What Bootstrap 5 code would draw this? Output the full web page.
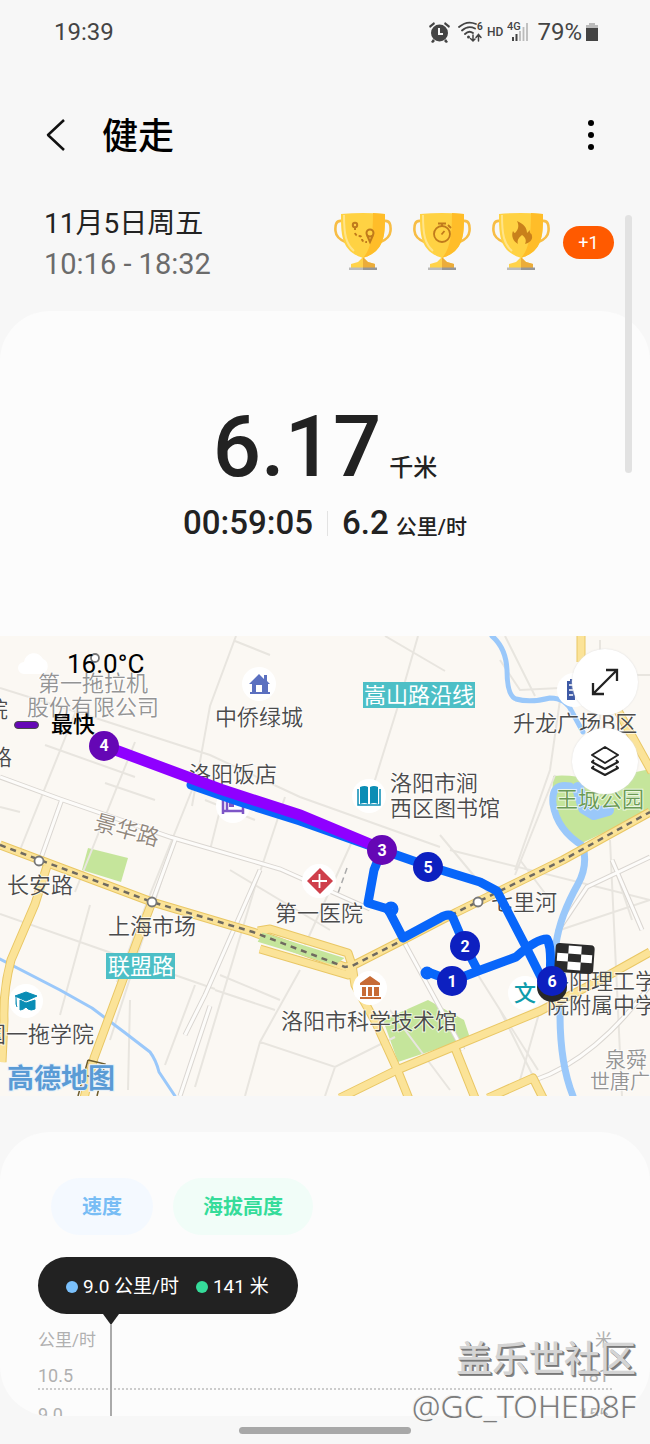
<!DOCTYPE html>
<html lang="zh-CN">
<head>
<meta charset="utf-8">
<meta name="viewport" content="width=device-width, initial-scale=1">
<title>健走</title>
<link href="https://cdn.jsdelivr.net/npm/bootstrap@5.3.0/dist/css/bootstrap.min.css" rel="stylesheet">
<style>
  body { background: #f7f7f7; color: #222; font-family: Roboto, "Noto Sans CJK SC", sans-serif; overflow-x: hidden; }
  svg { display: block; flex: none; }
  .status-row { height: 64px; padding: 0 52px 0 54px; font-size: 24px; line-height: 32px; color: #444; }
  .hd-mark { font-size: 12px; font-weight: 500; line-height: 16px; }
  .title-row { padding: 45px 44px 0 44px; height: 116px; }
  .title-row h1 { font-size: 36px; line-height: 56px; font-weight: 500; color: #000; padding-left: 34px; }
  .plain-btn { border: 0; background: none; padding: 0; color: #000; }
  .date-row { padding: 24px 36px 27px 44px; }
  .date-main { font-size: 28px; line-height: 40px; }
  .date-sub { font-size: 29px; line-height: 40px; color: #6b6b6b; }
  .trophies { gap: 21px; }
  .more-pill { width: 51px; height: 33px; margin-left: 13px; border-radius: 17px; background: #ff5a00; color: #fff; font-size: 18px; line-height: 33px; text-align: center; }
  .thumb-bar { position: absolute; top: 215px; right: 18px; width: 7px; height: 258px; border-radius: 4px; background: #e2e2e2; }
  .sheet { background: #fcfcfc; }
  .summary { border-radius: 50px 50px 0 0; padding: 86px 0 90px; }
  .distance { font-size: 85px; line-height: 100px; font-weight: 500; }
  .distance small { font-size: 24px; line-height: 24px; font-weight: 500; margin-left: 8px; }
  .pace { font-size: 33px; line-height: 46px; font-weight: 500; margin-top: 3px; }
  .pace small { font-size: 21px; line-height: 21px; font-weight: 500; margin-left: 7px; }
  .pace .rule { width: 1px; height: 25px; background: #e3e3e3; margin: 0 14px; }
  .map-box svg.city { width: 100%; height: auto; font-family: "Noto Sans CJK SC", sans-serif; font-size: 22px; font-weight: 300; }
  .overlay-left { position: absolute; top: 13px; left: 14px; color: #000; }
  .temp { font-size: 26px; line-height: 30px; gap: 17px; }
  .legend-row { font-size: 22px; line-height: 30px; font-weight: 500; margin-top: 31px; gap: 12px; }
  .swatch { width: 25px; height: 8px; border: 1px solid #4a4a4a; border-radius: 4px; background: #6507b5; }
  .overlay-right { position: absolute; top: 13px; right: 12px; gap: 13px; }
  .round-btn { width: 66px; height: 66px; border: 0; border-radius: 50%; background: #fff; box-shadow: 0 0 2px #ddd; padding: 0; display: grid; place-items: center; }
  .chart-sheet { margin-top: 36px; border-radius: 50px; overflow: hidden; padding: 46px 38px 0; }
  .chips { gap: 20px; padding-left: 13px; }
  .chip { border: 0; border-radius: 29px; height: 57px; padding: 0 30px; font-size: 20px; font-weight: 700; }
  .chip-speed { background: #f4f9ff; color: #78bdf5; padding: 0 31px; }
  .chip-alt { background: #f1fdf8; color: #35dc9a; }
  .bubble { position: relative; margin-top: 22px; height: 57px; width: max-content; border-radius: 29px; background: #222; color: #fff; font-size: 19px; padding: 3px 29px 0 28px; }
  .bubble::after { content: ""; position: absolute; top: 100%; left: 65px; border: 8px solid transparent; border-bottom-width: 0; border-top: 11px solid #222; }
  .bubble i { width: 12px; height: 12px; border-radius: 50%; background: #7ac0fb; margin-right: 5px; }
  .bubble i.alt { background: #35dc9a; margin: 0 5px 0 17px; }
  .plot { position: relative; margin-top: 14px; font-size: 18px; line-height: 24px; color: #b0b0b0; }
  .plot .unit { font-size: 17px; }
  .plot .tick { margin-top: 12px; border-bottom: 2px dotted #ccc; padding-right: 3px; }
  .plot .cut { margin-top: 13px; height: 13px; overflow: hidden; border: 0; }
  .plot .cursor-line { position: absolute; top: -3px; bottom: 0; left: 72px; border-left: 2px solid #aaa; }
  .home-bar { width: 172px; height: 7px; border-radius: 4px; background: #a8a8a8; margin: 11px auto 10px; }
  .stamp { position: absolute; right: 14px; bottom: 5px; text-align: right; color: #d4d4d4; text-shadow: 1px 1px 0 #777, 2px 2px 0 #888; }
  .stamp b { display: block; font-size: 36px; line-height: 46px; font-weight: 500; }
  .stamp span { display: block; font: 300 32px/46px "Noto Sans", sans-serif; color: #7c7c7c; text-shadow: -1px -1px 0 #eee; }
</style>
</head>
<body>
<div class="position-relative">
  <div class="status-row d-flex align-items-center">
    <span>19:39</span>
    <div class="ms-auto d-flex align-items-center">
      <svg width="21" height="22" viewBox="0 0 21 22" fill="#444"><circle cx="10.500" cy="12" r="8.500"/><path d="M1 7L0 5 5 1l1 2zM20 7l1-2-5-4-1 2zM4 18l2 2-2 2-2-1zM17 18l-2 2 2 2 2-1z"/><path d="M10 7v6h4" fill="none" stroke="#f7f7f7" stroke-width="2"/></svg>
      <svg class="ms-2" width="25" height="22" viewBox="0 0 25 22"><g fill="none" stroke="#444" stroke-width="1.800" stroke-linecap="round"><path d="M1 6Q9-1 18 3M4 9.500Q10 4 17 7.500M7 13q4-4 8-1"/><path d="M15 14v6M12.500 17.500L15 20l2-2M20.500 20v-6M18 16.500l2.500-3 2.500 3" stroke-width="1.500"/></g><circle cx="10.500" cy="16" r="1.500" fill="#444"/><text x="19" y="9" font-size="10" font-weight="700" fill="#444">6</text></svg>
      <span class="hd-mark ms-1">HD</span>
      <svg class="ms-1" width="22" height="22" viewBox="0 0 22 22"><text x="0" y="9" font-size="11" font-weight="500" fill="#444">4G</text><path d="M6 20v-4M9.500 20v-7" stroke="#444" stroke-width="2"/><path d="M13 20V10M16.500 20V6M20 20V2" stroke="#bbb" stroke-width="1.800"/></svg>
      <span class="ms-2">79%</span>
      <svg class="ms-1" width="12" height="20" viewBox="0 0 12 20"><path d="M3 1h6v2h3v6H0V3h3z" fill="#bbb"/><path d="M0 6h12v13H0z" fill="#444"/></svg>
    </div>
  </div>

  <header class="title-row d-flex align-items-start">
    <button class="plain-btn" aria-label="返回"><svg width="24" height="52" viewBox="0 0 24 52"><path d="M20 11L4 26l16 15" fill="none" stroke="#111" stroke-width="2.500" stroke-linejoin="round"/></svg></button>
    <h1 class="mb-0 flex-fill">健走</h1>
    <button class="plain-btn" aria-label="更多"><svg width="30" height="52" viewBox="0 0 30 52"><g fill="#000"><circle cx="15" cy="14" r="3"/><circle cx="15" cy="26" r="3"/><circle cx="15" cy="38" r="3"/></g></svg></button>
  </header>

  <section class="date-row d-flex">
    <div>
      <div class="date-main">11月5日周五</div>
      <div class="date-sub">10:16 - 18:32</div>
    </div>
    <div class="ms-auto d-flex align-items-center pb-1">
      <svg width="0" height="0" class="position-absolute"><defs>
        <g id="cup">
          <path d="M8 8C2 7 1 12 1.500 18s5 9 10 11M50 8c6-1 7 4 6.500 10s-5 9-10 11" fill="none" stroke="#f7bd45" stroke-width="2.600"/>
          <path d="M29 44l5 5 7 2v4H17v-4l7-2z" fill="#ffd34a"/><path d="M29 44l5 5 7 2v4H29z" fill="#ebac3a"/>
          <path d="M15 54.500h14V57H15z" fill="#bbb"/><path d="M29 54.500h14V57H29z" fill="#969696"/>
          <path d="M7 1Q29-1 51 1C51 22 51 38 29 45 7 38 7 22 7 1z" fill="#ffd243"/>
          <path d="M39 0l12 1C51 22 51 38 29 45c8-9 10-22 10-45z" fill="#ffbd29"/>
          <path d="M10 2c0 20 2 29 10 36" fill="none" stroke="#ffe48a" stroke-width="2"/>
        </g></defs></svg>
      <div class="trophies d-flex">
        <svg width="58" height="58" viewBox="0 0 58 58"><use href="#cup"/><g fill="none" stroke="#c07a1c" stroke-width="2"><circle cx="21" cy="12" r="2.200"/><path d="M21 14v4M21 20q1 3 4 3t3 3 5 3" stroke-dasharray="3 2"/><circle cx="36" cy="20" r="3.500"/><path d="M33 22l3 7 3-7"/></g></svg>
        <svg width="58" height="58" viewBox="0 0 58 58"><use href="#cup"/><g fill="none" stroke="#c07a1c" stroke-width="1.800"><circle cx="29" cy="21" r="8"/><path d="M25 10.500h8M29 10v3M35 12l3 3M28.500 21.500l3-3.500"/></g></svg>
        <svg width="58" height="58" viewBox="0 0 58 58"><use href="#cup"/><path d="M26 31c-5-3-7-8-5-13 1 1 1 2 2 2 4-4 4-8 2-12 7 3 10 7 10 12l3-3c-1 4 2 3 2 6 1 4-3 7-7 8 2-4 0-7-3-9-4 3-5 6-4 9z" fill="#c9801b"/></svg>
      </div>
      <span class="more-pill">+1</span>
    </div>
  </section>
  <div class="thumb-bar"></div>

  <section class="sheet summary">
    <div class="distance text-center">6.17<small>千米</small></div>
    <div class="pace d-flex justify-content-center align-items-center">
      <span>00:59:05</span><span class="rule"></span><span>6.2<small>公里/时</small></span>
    </div>
  </section>

  <section class="map-box position-relative">
    <svg class="city" viewBox="0 636 650 460">
      <rect y="636" width="650" height="460" fill="#fbf8f3"/>
      <!-- parks -->
      <g fill="#c5e59b">
        <path d="M88 848l40 10-7 24-39-12z"/>
        <path d="M553 776q20-2 40 5 30-6 57-12v42l-68 32q-24-20-30-40z"/>
        <path d="M383 1020l45-20 36 20 6 18-72 24z"/>
      </g>
      <!-- minor streets -->
      <g fill="none" stroke="#e8e5df" stroke-width="2">
        <path d="M0 688l80 25 130 42 90 42 140 50M236 636l-26 70-18 100M235 641l35 14M78 706L20 850M135 742l-60 150M192 790l-45 112-30 80M45 745l90 32M105 783l50 17M0 807l20 5M285 797l-30 90-60 200M355 835l-50 110M165 870l-55 170M0 914l100 35 115 40M418 636l-20 70-28 90M385 636l60 35M500 660l20 30 40-2M560 700l-10 70-35 100M555 775l-40 100M440 835l50 60M220 975l60 25M300 970l-40 72 75 25 60-30M260 1042l-15 54M130 1000l-2 90M195 985l-30 80M335 1067l-10 29M478 975l60 95M500 1010l40 80M560 930l90-30M612 860l20 60M600 720v-80M600 675h50M610 840l12 256M230 870l100 60M90 905l-30 110M215 990l60 20"/>
        <path d="M505 636l30 60M450 850l200 50M195 780l30 10-15 60M205 800l50 20M520 860l30 40M540 1010l-20 70M390 1010l60 80"/>
      </g>
      <g fill="none">
        <path d="M0 777l60 22 110 38 110 32 90 40M62 799L41 858M260 870l-55 125-20 40M175 840l-22 60M403 940l60 110M535 1080q30-10 60-35t55-60M557 932l30-45 63-30M612 860l30 70M180 1096l30-90" stroke="#dad6d1" stroke-width="5"/>
        <path d="M0 777l60 22 110 38 110 32 90 40M62 799L41 858M260 870l-55 125-20 40M175 840l-22 60M403 940l60 110M535 1080q30-10 60-35t55-60M557 932l30-45 63-30M612 860l30 70M180 1096l30-90" stroke="#fdfcfa" stroke-width="3"/>
        <path d="M347 868l-10 28" stroke="#aaa" stroke-width="1.500" stroke-dasharray="6 4"/>
      </g>
      <!-- water -->
      <g fill="none" stroke="#9ac8fa" stroke-linecap="round" stroke-linejoin="round">
        <path d="M0 959l60 31 32 18 32 24 26 20q6 8 9 20l16 24" stroke-width="3"/>
        <path d="M492 636q14 12 15 34 0 26 9 29 14 4 34-1 16 0 22 14l11 20" stroke-width="5"/>
        <path d="M570 786q-19-4-17 18 4 26 30 42 5 20-5 38-18 32-22 60-3 30 4 70 0 50 13 82" stroke-width="7"/>
        <path d="M578 788l6 20 10 6 14-4" stroke-width="12"/>
      </g>
      <!-- main roads -->
      <g fill="none" stroke="#e9c765" stroke-width="9" stroke-linejoin="round">
        <path d="M0 845l40 15 112 42 101 30 92 35 7-1 51-26 54-28 106-52 87-48"/>
        <path d="M47 866l-12 38-24 56q-8 30-7 60l-2 42M152 902l-10 26-48 130-10 40M352 965l3 20 20 36 22 48 12 30M340 1098l57-28 58-24 85-35 60-31 50-28M455 1048l20 50M488 1098l45-20 10 20M581 636v26M612 700l40 72M258 931l12-2 78 24 4 12-4 10-88-26"/>
      </g>
      <g fill="none" stroke="#fbe398" stroke-width="7" stroke-linejoin="round">
        <path d="M47 866l-12 38-24 56q-8 30-7 60l-2 42M152 902l-10 26-48 130-10 40M352 965l3 20 20 36 22 48 12 30M340 1098l57-28 58-24 85-35 60-31 50-28M455 1048l20 50M488 1098l45-20 10 20M581 636v26M612 700l40 72M258 931l12-2 78 24 4 12-4 10-88-26"/>
        <path d="M0 845l40 15 112 42 101 30 92 35 7-1 51-26 54-28 106-52 87-48"/>
      </g>
      <path d="M264 936l74 23-4 3-72-22z" fill="#c5e59b" stroke="#c5e59b" stroke-width="6"/>
      <path d="M0 845l40 15 112 42 101 30 92 35 7-1 51-26 54-28 106-52 87-48" fill="none" stroke="#6f6a60" stroke-width="2.500" stroke-dasharray="6 5"/>
      <path d="M88 1060l17 4-8 32M88 1060l-10 36M84 1075l16 4" fill="none" stroke="#6d5c2c" stroke-width="1.500"/>
      <g fill="#fff" stroke="#777" stroke-width="1.800"><circle cx="39" cy="861" r="4.500"/><circle cx="152" cy="902" r="4.500"/><circle cx="478" cy="902" r="4.500"/><circle cx="95" cy="658" r="4"/></g>
      <!-- place icons -->
      <g fill="#fff"><circle cx="259" cy="684" r="17"/><circle cx="233" cy="806" r="17"/><circle cx="369" cy="796" r="17"/><circle cx="319" cy="881" r="17"/><circle cx="370" cy="988" r="17"/><circle cx="26" cy="1001" r="17"/><circle cx="525" cy="993" r="17"/><circle cx="574" cy="690" r="17"/></g>
      <path d="M249 684l10-10 5 5v-4h3v6l3 3h-2v8h2v2h-20v-2h2v-8zM256 692h6v-7h-6z" fill="#5b70c0" fill-rule="evenodd"/>
      <path d="M223 797v17M223 811h20v-10h-16v10M243 811v3" fill="none" stroke="#7d55c7" stroke-width="2.500"/><path d="M229 803h5v4h-5z" fill="#7d55c7"/>
      <path d="M358 789v16h22v-16" fill="none" stroke="#0a8db5" stroke-width="1.500"/>
      <path d="M360 787q5-2 8 0v17q-3-2-8 0zM370 787q4-2 8 0v17q-4-2-8 0z" fill="#0a8db5"/>
      <path d="M320 868l13 13-13 13-13-13z" fill="#cf3f4b"/><path d="M312 881h15M319.500 874v14" stroke="#fff" stroke-width="1.800"/>
      <path d="M370 976l10 7v2h-20v-2zM362 987h4v9h-4zM368 987h4v9h-4zM374 987h5v9h-5zM360 997h21v2h-21z" fill="#c76b35"/>
      <path d="M15 996l11-4 11 4-11 5zM20 1000l6 3 9-3v9q-4 2-7 0l-2-2q-3 3-6 3zM16 997v7l1 3" fill="#0a8db5" stroke="#0a8db5"/>
      <path d="M567 700v-19h3v-2h5v21z" fill="#3d59a5"/><path d="M569 685h4M569 690h4M569 695h4" stroke="#fff" stroke-width="1.500"/>
      <text x="514" y="1001" fill="#0f9cab" font-weight="500">文</text>
      <!-- place names -->
      <g fill="#4b4b4b" stroke="#fff" stroke-width="2" stroke-opacity=".7" paint-order="stroke" style="font-weight:350">
        <g fill="#949494"><text x="38" y="691">第一拖拉机</text><text x="27" y="715">股份有限公司</text><text x="605" y="1067" font-size="21">泉舜·</text><text x="590" y="1089" font-size="20">世唐广</text></g>
        <text x="-14" y="717">院</text><text x="-10" y="765">路</text>
        <text x="215" y="725">中侨绿城</text><text x="189" y="782">洛阳饭店</text>
        <text x="390" y="791">洛阳市涧</text><text x="390" y="816">西区图书馆</text>
        <text x="513" y="731">升龙广场B区</text><text x="556" y="807" fill="#6a9a55">王城公园</text>
        <text x="491" y="910">七里河</text><text x="7" y="893">长安路</text><text x="108" y="934">上海市场</text>
        <text x="275" y="921">第一医院</text><text x="281" y="1029">洛阳市科学技术馆</text>
        <text x="547" y="989">洛阳理工学</text><text x="547" y="1013">院附属中学</text>
        <text x="-16" y="1042">国一拖学院</text>
        <text x="93" y="829" fill="#91877c" transform="rotate(15 93 829)">景华路</text>
      </g>
      <path d="M363 682h112v26H363zM106 953h69v26h-69z" fill="#4dbfc6"/>
      <g fill="#fff" font-weight="400"><text x="364" y="703">嵩山路沿线</text><text x="108" y="974">联盟路</text></g>
      <text x="7" y="1088" font-size="27" font-weight="700" fill="#5a9bd5" stroke="#e6f1fa" stroke-width="2" paint-order="stroke">高德地图</text>
      <!-- walked route -->
      <g fill="none" stroke="#0866fa" stroke-width="9" stroke-linecap="round" stroke-linejoin="round">
        <path d="M191 785l49 17 60 19 82 29 46 16 52 16 17 9 28 54 20 40M382 850l-8 20-6 33 20 6 15 29 37-20q10-6 13 0l12 28 13 25M428 972l24 9 26-10 38-14q20-18 31-18 5 8 3 38"/>
        <circle cx="391" cy="909" r="3"/><circle cx="427" cy="973" r="2"/>
      </g>
      <path d="M110 748l110 41 80 26 82 34" fill="none" stroke="#8f00ff" stroke-width="11"/>
      <!-- finish flag -->
      <g transform="rotate(4 574 958)"><rect x="555" y="944" width="39" height="29" rx="4" fill="#2b2b2b"/><path d="M568 946h13v8h-13zM557 954h11v8h-11zM581 954h11v8h-11zM568 962h13v8h-13z" fill="#fff"/></g>
      <circle cx="552" cy="987" r="15" fill="#282828"/>
      <g fill="#6507b5"><circle cx="104" cy="746" r="15"/><circle cx="382" cy="850" r="15"/></g>
      <g fill="#0d20c0"><circle cx="428" cy="867" r="15"/><circle cx="465" cy="946" r="15"/><circle cx="452" cy="981" r="15"/><circle cx="552" cy="981" r="15"/></g>
      <g fill="#fff" text-anchor="middle" style="font:700 16px Roboto,sans-serif"><text x="104" y="751">4</text><text x="382" y="856">3</text><text x="428" y="873">5</text><text x="465" y="952">2</text><text x="452" y="987">1</text><text x="552" y="987">6</text></g>
    </svg>

    <div class="overlay-left">
      <div class="temp d-flex align-items-center">
        <svg width="36" height="24" viewBox="0 0 36 24"><path d="M10 22a6 6 0 010-12 10 10 0 0119-3 8 8 0 01-1 15z" fill="#fff"/></svg>
        <span>16.0°C</span>
      </div>
      <div class="legend-row d-flex align-items-center"><span class="swatch"></span><span>最快</span></div>
    </div>
    <div class="overlay-right d-flex flex-column">
      <button class="round-btn" aria-label="展开地图"><svg width="30" height="30" viewBox="0 0 30 30"><path d="M3 27L27 3M16 3h11v11M3 16v11h11" fill="none" stroke="#222" stroke-width="2.300"/></svg></button>
      <button class="round-btn" aria-label="图层"><svg width="30" height="32" viewBox="0 0 30 32"><g fill="none" stroke="#222" stroke-width="2" stroke-linejoin="round"><path d="M15 2l13 8-13 8L2 10zM4 15l-2 2 13 7 13-7-2-2M4 21l-2 2 13 7 13-7-2-2"/></g></svg></button>
    </div>
  </section>

  <section class="sheet chart-sheet">
    <div class="chips d-flex">
      <button class="chip chip-speed">速度</button>
      <button class="chip chip-alt">海拔高度</button>
    </div>
    <div class="bubble d-flex align-items-center"><i></i><span>9.0 公里/时</span><i class="alt"></i><span>141 米</span></div>
    <div class="plot">
      <div class="unit d-flex justify-content-between"><span>公里/时</span><span>米</span></div>
      <div class="tick d-flex justify-content-between"><span>10.5</span><span>181</span></div>
      <div class="tick cut d-flex justify-content-between"><span>9.0</span><span>155</span></div>
      <div class="cursor-line"></div>
    </div>
  </section>
  <div class="home-bar"></div>
  <div class="stamp"><b>盖乐世社区</b><span>@GC_TOHED8F</span></div>
</div>
<script src="https://cdn.jsdelivr.net/npm/bootstrap@5.3.0/dist/js/bootstrap.bundle.min.js"></script>
</body>
</html>
